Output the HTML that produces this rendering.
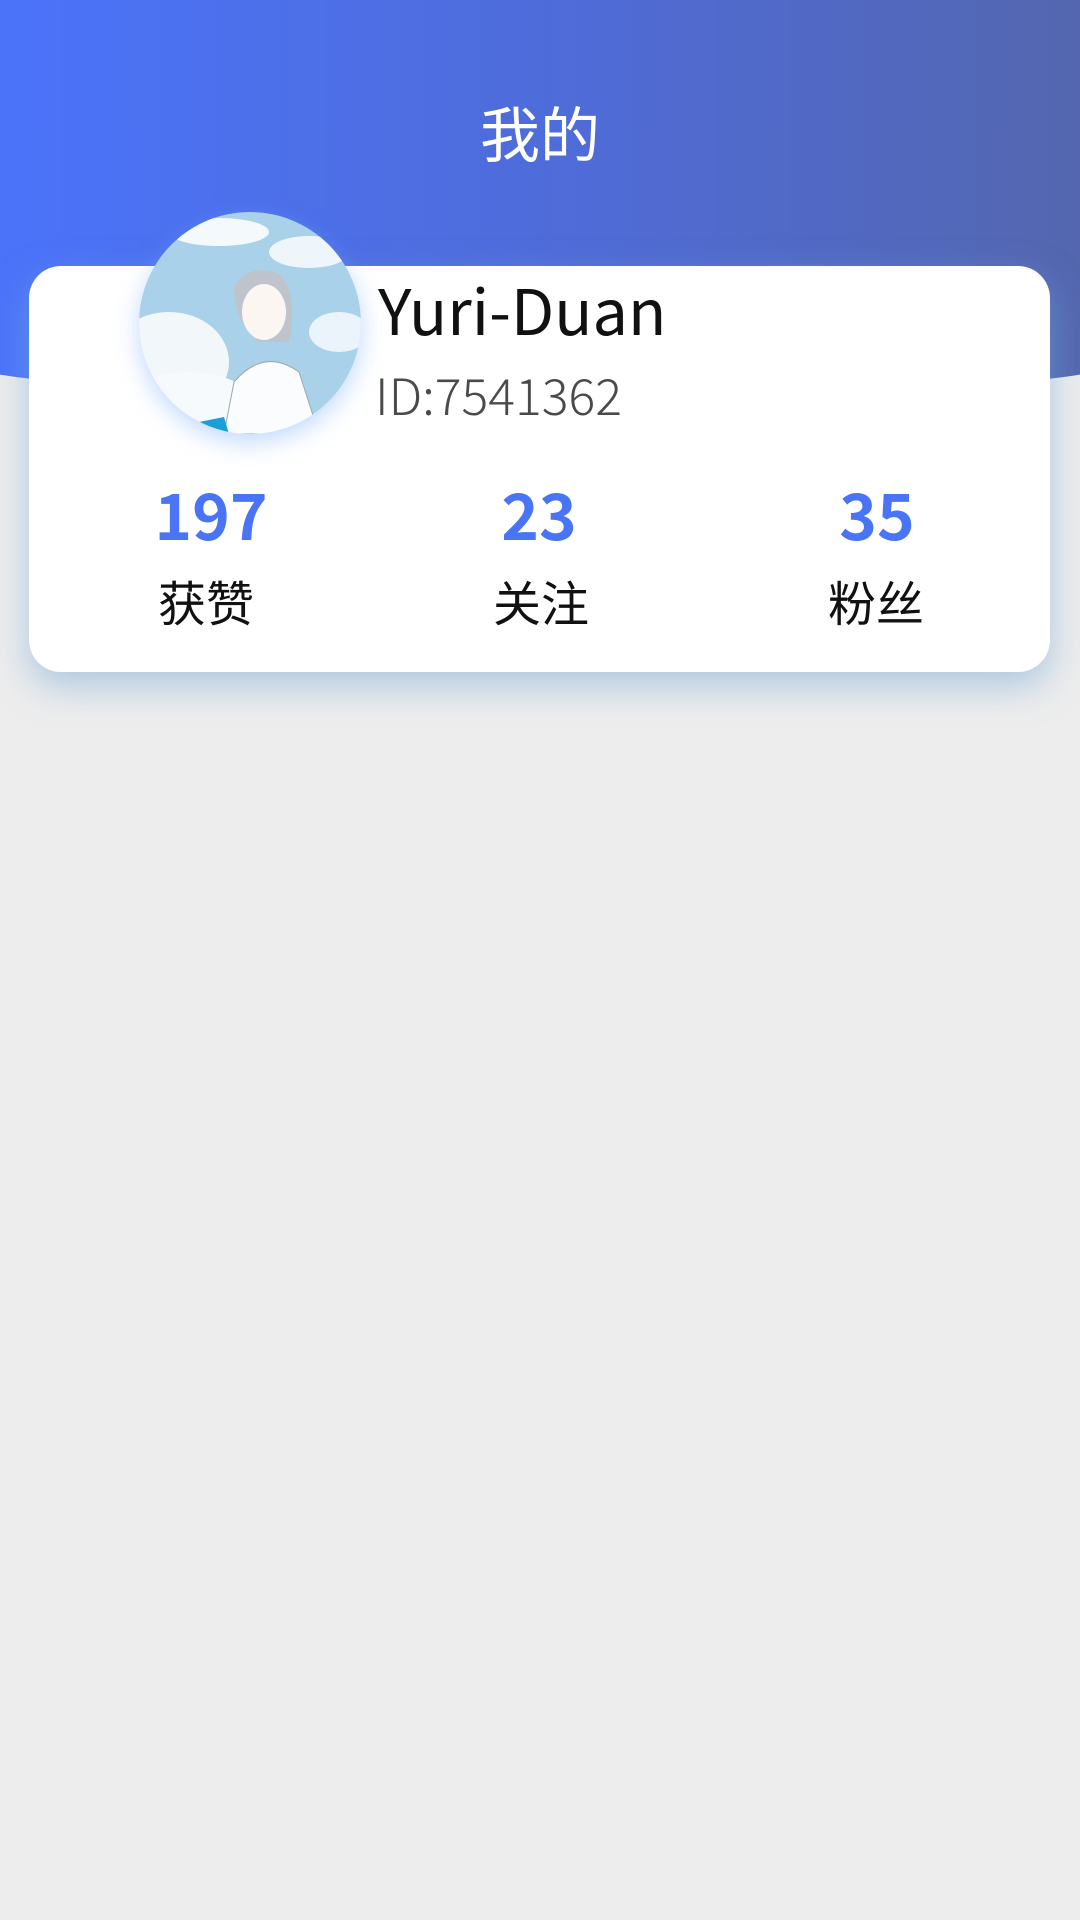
<!DOCTYPE html>
<html><head><meta charset="utf-8"><style>
*{margin:0;padding:0;box-sizing:border-box}
body{width:1080px;height:1920px;background:#ededed;position:relative;overflow:hidden;font-family:"Noto Sans CJK SC","Liberation Sans",sans-serif}
.hdr{position:absolute;left:-60px;top:-200px;width:1200px;height:600px;border-radius:0 0 50% 50%/0 0 45px 45px;background:linear-gradient(90deg,#4a74fe 0%,#4f6bd6 55%,#5466aa 100%)}
.title{position:absolute;left:0;width:1080px;top:92px;text-align:center;color:#fff;font-size:60px;line-height:80px}
.card{position:absolute;left:29px;top:266px;width:1021px;height:406px;background:#fff;border-radius:32px;box-shadow:0 14px 36px rgba(120,170,215,.55)}
.av{position:absolute;left:139px;top:212px;width:222px;height:222px;border-radius:50%;overflow:hidden;box-shadow:0 8px 24px rgba(120,170,255,.45)}
.name{position:absolute;left:378px;top:266px;font-size:63px;line-height:86px;color:#111}
.id{position:absolute;left:375px;top:361px;font-size:50px;line-height:66px;color:#4a4a4a;font-weight:300}
.num{position:absolute;top:468px;width:240px;text-align:center;font-size:64px;font-weight:bold;color:#4a74f6;line-height:90px}
.lab{position:absolute;top:565px;width:240px;text-align:center;font-size:48px;color:#111;line-height:70px}
</style></head><body>
<div class="hdr"></div>
<div class="title">我的</div>
<div class="card"></div>
<div class="av"><svg width="222" height="222" viewBox="0 0 222 222">
<rect width="222" height="222" fill="#a9d2ea"/>
<ellipse cx="80" cy="20" rx="50" ry="14" fill="#f4f9fc"/>
<ellipse cx="170" cy="40" rx="40" ry="16" fill="#eef6fb"/>
<ellipse cx="30" cy="150" rx="60" ry="50" fill="#f2f7fa"/>
<ellipse cx="50" cy="200" rx="70" ry="40" fill="#f7fafc"/>
<ellipse cx="200" cy="120" rx="30" ry="20" fill="#eaf4fa"/>
<path d="M95 75 Q110 50 140 62 Q160 80 150 130 L120 130 Q95 110 95 75Z" fill="#bfc4cc"/>
<ellipse cx="125" cy="100" rx="22" ry="28" fill="#fbf6f2"/>
<path d="M85 222 L95 170 Q125 135 160 160 L180 222Z" fill="#fafcfd" stroke="#9aa" stroke-width="1"/>
<path d="M60 210 L85 205 L90 222 L60 222Z" fill="#1aa0d6"/>
</svg></div>
<div class="name">Yuri-Duan</div>
<div class="id">ID:7541362</div>
<div class="num" style="left:91px">197</div>
<div class="num" style="left:419px">23</div>
<div class="num" style="left:757px">35</div>
<div class="lab" style="left:86px">获赞</div>
<div class="lab" style="left:421px">关注</div>
<div class="lab" style="left:756px">粉丝</div>
</body></html>
